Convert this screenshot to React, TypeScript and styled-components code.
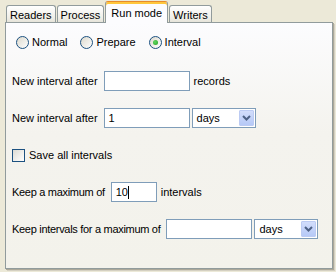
import React from "react"
import styled, { createGlobalStyle } from "styled-components"

const GlobalStyle = createGlobalStyle`
  html, body {
    margin: 0;
    padding: 0;
    background: #ece9d8;
  }
  body {
    font-family: "Liberation Sans", Arial, sans-serif;
    font-size: 11px;
    color: #000;
  }
`

const tabs = ["Readers", "Process", "Run mode", "Writers"]

const App = (): JSX.Element => {
  return (
    <>
      <GlobalStyle />
      <Window>
        <TabStrip>
          {tabs.map((t) => (
            <Tab key={t} $active={t === "Run mode"}>
              {t}
            </Tab>
          ))}
        </TabStrip>
        <Panel>
          <RadioRow>
            <Choice>
              <Radio />
              Normal
            </Choice>
            <Choice>
              <Radio />
              Prepare
            </Choice>
            <Choice>
              <Radio $checked />
              Interval
            </Choice>
          </RadioRow>

          <Row>
            <Label>New interval after</Label>
            <Field $w={86} />
            <Suffix>records</Suffix>
          </Row>

          <Row>
            <Label>New interval after</Label>
            <Field $w={86}>1</Field>
            <Combo>
              days
              <DropButton>
                <Chevron />
              </DropButton>
            </Combo>
          </Row>

          <Row>
            <Check />
            <CheckText>Save all intervals</CheckText>
          </Row>

          <Row>
            <Label $tight>Keep a maximum of</Label>
            <Field $w={46}>
              10
              <Caret />
            </Field>
            <Suffix>intervals</Suffix>
          </Row>

          <Row>
            <Label $tight>Keep intervals for a maximum of</Label>
            <Field $w={86} />
            <Combo>
              days
              <DropButton>
                <Chevron />
              </DropButton>
            </Combo>
          </Row>
        </Panel>
      </Window>
    </>
  )
}

const Chevron = () => (
  <svg width="9" height="6" viewBox="0 0 9 6">
    <path d="M1 1 L4.5 4.5 L8 1" fill="none" stroke="#4d6185" strokeWidth="2" />
  </svg>
)

const Window = styled.div`
  width: 336px;
  height: 272px;
  box-sizing: border-box;
  padding: 1px 3px 0 5px;
  display: flex;
  flex-direction: column;
`

const TabStrip = styled.div`
  position: relative;
  z-index: 1;
  height: 22px;
  margin-bottom: -1px;
  padding-left: 1px;
  display: flex;
  align-items: flex-end;
`

const Tab = styled.div<{ $active?: boolean }>`
  box-sizing: border-box;
  height: ${(p) => (p.$active ? "22px" : "17px")};
  margin-bottom: ${(p) => (p.$active ? "0" : "1px")};
  margin-right: 1px;
  padding: ${(p) => (p.$active ? "1px 5px 0" : "1px 3px 0")};
  display: flex;
  align-items: center;
  border: 1px solid #919b9c;
  border-bottom: none;
  border-top: 1px solid ${(p) => (p.$active ? "#e68b2c" : "#919b9c")};
  border-radius: 3px 3px 0 0;
  background: ${(p) =>
    p.$active ? "#fcfcfe" : "linear-gradient(to bottom, #ffffff, #f0efe8 70%, #e6e4da)"};
  box-shadow: ${(p) => (p.$active ? "inset 0 2px 0 #ffc73c" : "none")};
  color: #000;
  white-space: nowrap;
`

const Panel = styled.div`
  box-sizing: border-box;
  width: 328px;
  height: 247px;
  border: 1px solid #919b9c;
  box-shadow: 1px 1px 0 #aca899, 2px 2px 0 #d4d0c2;
  background: linear-gradient(to bottom, #fcfcfe, #f4f3ee 45%, #f3f2eb);
  padding: 9px 6px 0;
  display: flex;
  flex-direction: column;
  gap: 17px;
`

const Row = styled.div`
  height: 20px;
  display: flex;
  align-items: center;
`

const RadioRow = styled(Row)`
  margin-bottom: 2px;
  padding-left: 4px;
  gap: 13px;
`

const Choice = styled.div`
  display: flex;
  align-items: center;
  gap: 3px;
`

const Radio = styled.span<{ $checked?: boolean }>`
  position: relative;
  box-sizing: border-box;
  width: 13px;
  height: 13px;
  border-radius: 50%;
  border: 1px solid #1c5180;
  background: linear-gradient(135deg, #dcd9cd, #ffffff);

  &::after {
    content: "";
    display: ${(p) => (p.$checked ? "block" : "none")};
    position: absolute;
    left: 3px;
    top: 3px;
    width: 5px;
    height: 5px;
    border-radius: 50%;
    background: radial-gradient(circle at 40% 40%, #61d861, #21a121);
  }
`

const Check = styled.span`
  box-sizing: border-box;
  width: 13px;
  height: 13px;
  border: 1px solid #1c5180;
  background: linear-gradient(135deg, #dcdbd4, #ffffff);
`

const CheckText = styled.span`
  margin-left: 4px;
`

const Label = styled.span<{ $tight?: boolean }>`
  margin-right: 6px;
  white-space: nowrap;
  letter-spacing: ${(p) => (p.$tight ? "-0.3px" : "0")};
`

const Suffix = styled.span`
  margin-left: 4px;
`

const Field = styled.div<{ $w: number }>`
  box-sizing: border-box;
  width: ${(p) => p.$w}px;
  height: 20px;
  border: 1px solid #7f9db9;
  background: #fff;
  padding: 0 4px;
  display: flex;
  align-items: center;
`

const Caret = styled.span`
  width: 1px;
  height: 13px;
  background: #000;
`

const Combo = styled.div`
  box-sizing: border-box;
  width: 64px;
  height: 20px;
  margin-left: 2px;
  border: 1px solid #7f9db9;
  background: #fff;
  padding: 0 1px 0 4px;
  display: flex;
  align-items: center;
  justify-content: space-between;
`

const DropButton = styled.span`
  box-sizing: border-box;
  width: 15px;
  height: 16px;
  display: flex;
  align-items: center;
  justify-content: center;
  border: 1px solid #bccbf3;
  border-radius: 1px;
  background: linear-gradient(to bottom, #d2ddfb, #b6c9f7);
`

export default App
